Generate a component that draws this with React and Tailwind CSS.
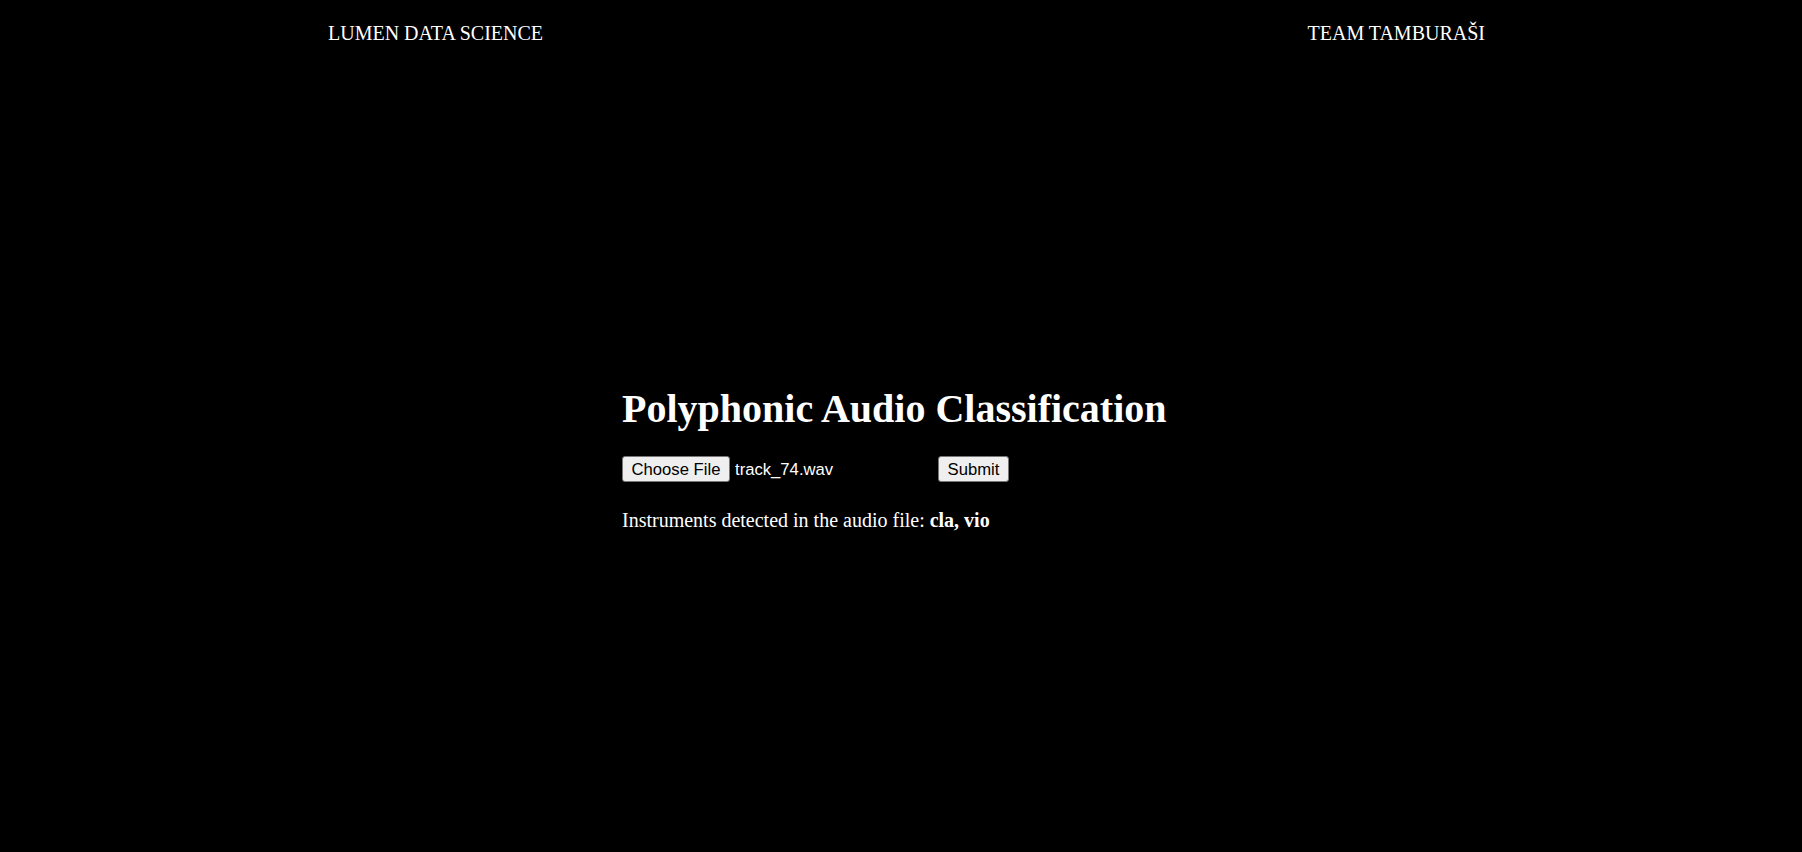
import React from 'react';

const serif = "font-['Liberation_Serif','Times_New_Roman',serif]";
const sans = "font-['Liberation_Sans',Arial,sans-serif]";

const App = () => {
  return (
    <div className={`min-h-screen bg-black text-white ${serif} text-[20px] leading-[23px]`}>
      {/* Header */}
      <header className="flex justify-between pl-[328px] pr-[317px] pt-[22px]">
        <span>LUMEN DATA SCIENCE</span>
        <span>TEAM TAMBURAŠI</span>
      </header>

      {/* Main content */}
      <main className="flex justify-center pt-[341px]">
        <div className="w-[558px]">
          <h1 className="text-[40px] leading-[46px] font-bold">Polyphonic Audio Classification</h1>

          <form className={`flex items-center mt-[24px] ${sans} text-[16.67px] leading-[19px]`} onSubmit={(e) => e.preventDefault()}>
            <div className="flex items-center w-[316px]">
              <button
                type="button"
                className="h-[26px] w-[108px] bg-[#efefef] text-black border border-[#767676] rounded-[3px] flex items-center justify-center"
              >
                Choose File
              </button>
              <span className="ml-[5px]">track_74.wav</span>
            </div>
            <button
              type="submit"
              className="h-[26px] w-[71px] bg-[#efefef] text-black border border-[#767676] rounded-[3px] flex items-center justify-center"
            >
              Submit
            </button>
          </form>

          <p className="mt-[27px]">
            Instruments detected in the audio file: <b>cla, vio</b>
          </p>
        </div>
      </main>
    </div>
  );
};

export default App;
